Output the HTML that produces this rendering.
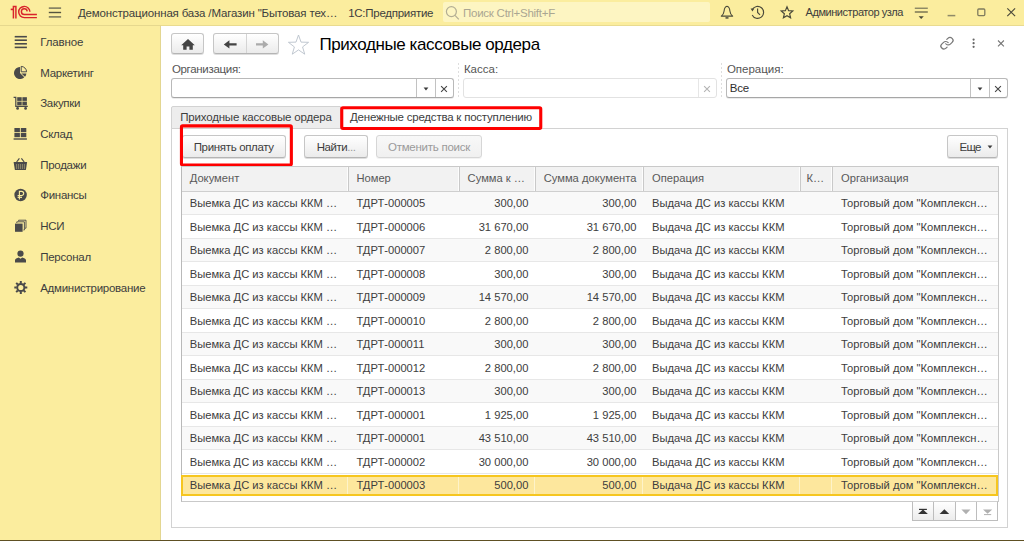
<!DOCTYPE html>
<html lang="ru">
<head>
<meta charset="utf-8">
<title>Приходные кассовые ордера</title>
<style>
*{box-sizing:border-box;margin:0;padding:0}
html,body{width:1024px;height:541px;overflow:hidden;background:#fff;font-family:"Liberation Sans",Arial,sans-serif;color:#333;font-size:11px}
.abs{position:absolute}
svg{position:absolute;overflow:visible}
#top{position:absolute;left:0;top:0;width:1024px;height:26px;background:#fbed9e;border-bottom:1px solid #e9db90}
#search{position:absolute;left:443px;top:2px;width:267px;height:20px;background:#fdf5c2;border-radius:2px}
#side{position:absolute;left:0;top:25px;width:161px;height:516px;background:#fbed9e;border-right:1px solid #e3d691;border-top:1px solid #e6d88e}
#bottomline{position:absolute;left:0;top:540px;width:1024px;height:1px;background:#5e5023}
.t{position:absolute;white-space:nowrap;color:#3d3d3d}
.t i{font-style:normal;color:#999}
.btn{position:absolute;border:1px solid #c6c6c6;border-bottom-color:#b4b4b4;border-radius:3px;background:linear-gradient(#ffffff,#ebebeb);box-shadow:0 1px 0 rgba(0,0,0,.13);white-space:nowrap}
.btn.dis{background:linear-gradient(#f8f8f8,#f0f0f0);box-shadow:0 1px 0 rgba(0,0,0,.05);border-color:#d6d6d6}
.inp{position:absolute;border:1px solid #b9b9b9;border-bottom-color:#a6a6a6;border-radius:3px;background:#fff;height:20px;box-shadow:0 1px 0 rgba(0,0,0,.08)}
.inp.dis{border-color:#e2e2e2;box-shadow:none}
.vdot{position:absolute;top:63px;width:1px;height:36px;background:repeating-linear-gradient(#dedede 0,#dedede 2px,transparent 2px,transparent 4px)}
#panel{position:absolute;left:171px;top:128px;width:837px;height:400px;border:1px solid #d2d2d2;background:#fff}
#tab1{position:absolute;left:171px;top:106px;width:170px;height:23px;background:#ededed;border:1px solid #d2d2d2;border-radius:2px 0 0 0}
#tab2{position:absolute;left:341px;top:107px;width:201px;height:22px;background:#fff}
#tbl{position:absolute;left:181px;top:166px;width:818px;height:336px;border:1px solid #c9c9c9;border-left-color:#b9b9b9;background:#fff}
#hd{position:absolute;left:182px;top:167px;width:816px;height:25px;background:#f2f2f2;border-bottom:1px solid #cfcfcf}
.hsep{position:absolute;top:167px;width:2px;height:24px;background:linear-gradient(90deg,#fdfdfd 50%,#c9c9c9 50%)}
.row{position:absolute;left:182px;width:816px;border-bottom:1px solid #e7e7e7}
.row.alt{background:#f9f9f9}
#sel{position:absolute;left:181px;top:475px;width:817px;height:21px;background:#fde79d;border:2px solid #f6c61f}
#pager{position:absolute;left:912px;top:501px;width:86px;height:20px;border:1px solid #bdbdbd;border-top-color:#d0d0d0;background:#fff}.pg{position:absolute;top:0;height:18px;border-right:1px solid #bdbdbd}.pg.a{background:linear-gradient(#fff,#ececec)}
.ssep{position:absolute;top:477px;width:1px;height:17px;background:#fef3c9}
</style>
</head>
<body>
<div id="top"></div>
<svg style="left:8px;top:3px" width="32" height="18" viewBox="8 3 32 18" ><g fill="none" stroke="#d9232b" stroke-width="1.45"><path d="M10.7 9.4H13.3" stroke-width="1.6"/><path d="M13.4 18.4V6.5H15.9V18.4"/><path d="M29.9 11.8A5.6 5.6 0 1 0 24.3 17.6H36.9"/><path d="M27.2 11.4A2.9 2.9 0 1 0 24.3 14.5H36.9"/></g></svg>
<svg style="left:46px;top:4px" width="18" height="16" viewBox="46 4 18 16" ><g stroke="#6d6b55" stroke-width="1.4"><path d="M48.8 8.1H61.1"/><path d="M48.8 12.5H61.1" stroke="#55543f"/><path d="M48.8 16.9H61.1"/></g></svg>
<div class="t" style="top:5.68px;font-size:11.5px;line-height:14px;height:14px;left:77.90px;letter-spacing:-0.162px;">Демонстрационная база /Магазин "Бытовая тех…</div>
<div class="t" style="top:5.68px;font-size:11.5px;line-height:14px;height:14px;left:348.20px;letter-spacing:-0.270px;">1С:Предприятие</div>
<div id="search"></div>
<svg style="left:444px;top:4px" width="16" height="18" viewBox="444 4 16 18" ><g fill="none" stroke="#b3ae94" stroke-width="1.2"><circle cx="451.4" cy="11.6" r="5"/><path d="M455 15.4L458.8 19.4"/></g></svg>
<div class="t" style="top:5.53px;font-size:11.5px;line-height:14px;height:14px;left:463.00px;letter-spacing:-0.246px;color:#aaa692;">Поиск Ctrl+Shift+F</div>
<svg style="left:718px;top:3px" width="18" height="18" viewBox="718 3 18 18" ><g fill="none" stroke="#4b4a3a" stroke-width="1.1" stroke-linejoin="round"><path d="M727 6.3C725.2 6.7 724.3 8.6 724.1 11C723.9 13.4 723.1 14.8 721.3 16.1H732.7C730.9 14.8 730.1 13.4 729.9 11C729.7 8.6 728.8 6.7 727 6.3Z"/><path d="M725.5 17.9H728.5" stroke-width="1.5"/></g></svg>
<svg style="left:748px;top:3px" width="20" height="20" viewBox="748 3 20 20" ><g fill="none" stroke="#4b4a3a" stroke-width="1.15"><path d="M752.3 9.6A6 6 0 1 1 752.2 15"/><path d="M757.6 8.4V12.4L760 14.8"/></g><path d="M750.6 8.4L754.4 8.6L752.4 11.6Z" fill="#4b4a3a"/></svg>
<svg style="left:778px;top:3px" width="18" height="18" viewBox="778 3 18 18" ><polygon points="787.00,6.80 788.62,10.68 792.80,11.01 789.62,13.75 790.59,17.84 787.00,15.65 783.41,17.84 784.38,13.75 781.20,11.01 785.38,10.68" fill="none" stroke="#4b4a3a" stroke-width="1.15" stroke-linejoin="miter"/></svg>
<div class="t" style="top:6.13px;font-size:11px;line-height:13px;height:13px;left:805.50px;letter-spacing:-0.438px;">Администратор узла</div>
<svg style="left:912px;top:4px" width="18" height="18" viewBox="912 4 18 18" ><g stroke="#4b4a3a" stroke-width="1.1"><path d="M914.8 8.2H927.8" stroke="#6a6852"/><path d="M914.8 12H927.8"/></g><path d="M918.6 16.3H923.8L921.2 19.1Z" fill="#4b4a3a"/></svg>
<svg style="left:945px;top:10px" width="12" height="8" viewBox="945 10 12 8" ><path d="M947.6 15.6H955.3" stroke="#8f8a68" stroke-width="1.5"/></svg>
<svg style="left:975px;top:6px" width="12" height="12" viewBox="975 6 12 12" ><rect x="977.8" y="9" width="7" height="6.6" rx="1" fill="none" stroke="#7f7b5e" stroke-width="1.3"/></svg>
<svg style="left:1005px;top:6px" width="12" height="12" viewBox="1005 6 12 12" ><path d="M1007.3 8.4L1015.1 16.1M1015.1 8.4L1007.3 16.1" stroke="#4d4b3b" stroke-width="1.2" fill="none"/></svg>
<div id="side"></div>
<div class="t" style="top:34.93px;font-size:11.5px;line-height:14px;height:14px;left:40.20px;letter-spacing:-0.108px;">Главное</div>
<div class="t" style="top:65.63px;font-size:11.5px;line-height:14px;height:14px;left:40.20px;letter-spacing:-0.270px;">Маркетинг</div>
<div class="t" style="top:96.33px;font-size:11.5px;line-height:14px;height:14px;left:40.20px;letter-spacing:-0.270px;">Закупки</div>
<div class="t" style="top:127.03px;font-size:11.5px;line-height:14px;height:14px;left:40.20px;letter-spacing:-0.270px;">Склад</div>
<div class="t" style="top:157.73px;font-size:11.5px;line-height:14px;height:14px;left:40.20px;letter-spacing:-0.270px;">Продажи</div>
<div class="t" style="top:188.43px;font-size:11.5px;line-height:14px;height:14px;left:40.20px;letter-spacing:-0.270px;">Финансы</div>
<div class="t" style="top:219.13px;font-size:11.5px;line-height:14px;height:14px;left:40.20px;letter-spacing:-0.270px;">НСИ</div>
<div class="t" style="top:249.83px;font-size:11.5px;line-height:14px;height:14px;left:40.20px;letter-spacing:-0.270px;">Персонал</div>
<div class="t" style="top:280.53px;font-size:11.5px;line-height:14px;height:14px;left:40.20px;letter-spacing:-0.269px;">Администрирование</div>
<svg style="left:13px;top:34px" width="16" height="16" viewBox="13 34 16 16" ><g stroke="#4a4a4a" stroke-width="1.6"><path d="M14.7 36.7H26.9"/><path d="M14.7 40.2H26.9"/><path d="M14.7 43.8H26.9"/><path d="M14.7 47.4H26.9"/></g></svg>
<svg style="left:12px;top:64px" width="18" height="18" viewBox="12 64 18 18" ><path d="M20 73V67A6 6 0 1 0 24.240000000000002 77.24Z" fill="#4a4a4a"/><path d="M21.2 71.8V66.4A5.6 5.6 0 0 1 26.6 71.8Z" fill="none" stroke="#4a4a4a" stroke-width="1"/><path d="M21.4 73.4H26.4A6 6 0 0 1 25 76.8Z" fill="#4a4a4a"/></svg>
<svg style="left:12px;top:95px" width="18" height="16" viewBox="12 95 18 16" ><g fill="#4a4a4a"><rect x="17.2" y="97.2" width="4.5" height="3.7"/><rect x="17.2" y="101.6" width="4.5" height="3.7"/><rect x="22.4" y="97.2" width="4.5" height="3.7"/><rect x="22.4" y="101.6" width="4.5" height="3.7"/><circle cx="17.6" cy="108.4" r="1.4"/><circle cx="25.6" cy="108.4" r="1.4"/></g><path d="M13.6 97.4H15.8V106.4H27.8" fill="none" stroke="#4a4a4a" stroke-width="1.2"/></svg>
<svg style="left:12px;top:126px" width="18" height="16" viewBox="12 126 18 16" ><g fill="#4a4a4a"><rect x="14.4" y="128" width="5.5" height="4.2"/><rect x="14.4" y="133" width="5.5" height="4.2"/><rect x="20.8" y="128" width="5.5" height="4.2"/><rect x="20.8" y="133" width="5.5" height="4.2"/></g><path d="M13.6 139H26.9" stroke="#4a4a4a" stroke-width="1.4"/></svg>
<svg style="left:12px;top:156px" width="18" height="16" viewBox="12 156 18 16" ><path d="M13.6 162H27.1L25.9 170H14.9Z" fill="#4a4a4a"/><g stroke="#fbed9e" stroke-width="0.7" opacity="0.55"><path d="M16.4 164V169"/><path d="M18.4 164V169"/><path d="M20.4 164V169"/><path d="M22.4 164V169"/><path d="M24.4 164V169"/></g><path d="M16.6 162L19.4 158.4M24.2 162L21.4 158.4" stroke="#4a4a4a" stroke-width="1.2" fill="none"/></svg>
<svg style="left:12px;top:187px" width="18" height="16" viewBox="12 187 18 16" ><circle cx="20.6" cy="195" r="6.2" fill="#4a4a4a"/><g fill="none" stroke="#fbed9e" stroke-width="1.1"><path d="M19.4 199.4V191.4H21.6A2.1 2.1 0 0 1 21.6 195.6H17.6"/><path d="M17.6 197.4H22"/></g></svg>
<svg style="left:12px;top:218px" width="18" height="16" viewBox="12 218 18 16" ><rect x="15" y="223.6" width="7.6" height="8.2" fill="#4a4a4a"/><path d="M16.8 223V221.8H24.4V230H23.4" fill="none" stroke="#4a4a4a" stroke-width="0.9"/><path d="M18.6 221.2V220.2H26V228.2H25" fill="none" stroke="#4a4a4a" stroke-width="0.9"/></svg>
<svg style="left:12px;top:249px" width="18" height="16" viewBox="12 249 18 16" ><circle cx="20.5" cy="253.6" r="3.1" fill="#4a4a4a"/><path d="M15 262.6V260.2C15 258.6 17 258 18.8 257.4L20.5 258.8L22.2 257.4C24 258 26 258.6 26 260.2V262.6Z" fill="#4a4a4a"/></svg>
<svg style="left:12px;top:279px" width="18" height="18" viewBox="12 279 18 18" ><circle cx="20.8" cy="287.5" r="3.6" fill="none" stroke="#4a4a4a" stroke-width="2"/><g stroke="#4a4a4a" stroke-width="2"><path d="M25.00 287.50L27.30 287.50"/><path d="M23.77 290.47L25.40 292.10"/><path d="M20.80 291.70L20.80 294.00"/><path d="M17.83 290.47L16.20 292.10"/><path d="M16.60 287.50L14.30 287.50"/><path d="M17.83 284.53L16.20 282.90"/><path d="M20.80 283.30L20.80 281.00"/><path d="M23.77 284.53L25.40 282.90"/></g></svg>
<div class="btn" style="left:171px;top:33px;width:33px;height:21px"></div>
<svg style="left:180px;top:37px" width="16" height="14" viewBox="180 37 16 14" ><path d="M188 39L181.2 45.2H183.2V49.8H186.6V46.4H189.4V49.8H192.8V45.2H194.8Z" fill="#444"/></svg>
<div class="btn" style="left:213px;top:33px;width:66px;height:21px"><div class="abs" style="left:32px;top:0;width:1px;height:19px;background:#d4d4d4"></div></div>
<svg style="left:222px;top:38px" width="16" height="12" viewBox="222 38 16 12" ><path d="M223.8 44.4L229.4 40.2V43.2H236.6V45.6H229.4V48.6Z" fill="#444"/></svg><svg style="left:254px;top:38px" width="16" height="12" viewBox="254 38 16 12" ><path d="M268.4 44.4L262.8 40.2V43.2H256V45.6H262.8V48.6Z" fill="#ababab"/></svg>
<svg style="left:286px;top:33px" width="24" height="24" viewBox="286 33 24 24" ><polygon points="298.50,35.00 301.03,42.12 308.58,42.32 302.59,46.93 304.73,54.18 298.50,49.90 292.27,54.18 294.41,46.93 288.42,42.32 295.97,42.12" fill="#fff" stroke="#b9c1cb" stroke-width="0.9"/></svg>
<div class="t" style="top:34.65px;font-size:17px;line-height:19px;height:19px;left:319.40px;letter-spacing:-0.404px;color:#000;">Приходные кассовые ордера</div>
<svg style="left:938px;top:34px" width="18" height="18" viewBox="938 34 18 18" ><g fill="none" stroke="#787878" stroke-width="2" stroke-linecap="round" stroke-linejoin="round" transform="translate(939.63,36.36) scale(0.61,0.57)"><path d="M10 13a5 5 0 0 0 7.54.54l3-3a5 5 0 0 0-7.07-7.07l-1.72 1.71"/><path d="M14 11a5 5 0 0 0-7.54-.54l-3 3a5 5 0 0 0 7.07 7.07l1.71-1.71"/></g></svg>
<svg style="left:971px;top:37px" width="6" height="12" viewBox="971 37 6 12" ><g fill="#666"><circle cx="973.6" cy="39.6" r="1.1"/><circle cx="973.6" cy="43.2" r="1.1"/><circle cx="973.6" cy="46.8" r="1.1"/></g></svg>
<svg style="left:996px;top:38px" width="10" height="10" viewBox="996 38 10 10" ><path d="M998 40.5L1003.9 46.4M1003.9 40.5L998 46.4" stroke="#777" stroke-width="1.1" fill="none"/></svg>
<div class="t" style="top:62.23px;font-size:11.5px;line-height:14px;height:14px;left:171.90px;letter-spacing:-0.314px;color:#555;">Организация:</div><div class="inp" style="left:171px;top:78px;width:283px"></div><div class="abs" style="left:416px;top:79px;width:1px;height:18px;background:#c2c2c2"></div><svg style="left:421.7px;top:86.2px" width="8" height="6" viewBox="421.7 86.2 8 6" ><path d="M423.3 87.8H428.09999999999997L425.7 90.7Z" fill="#3a3a3a"/></svg><div class="abs" style="left:435px;top:79px;width:1px;height:18px;background:#c2c2c2"></div><svg style="left:439.4px;top:84.2px" width="10" height="10" viewBox="439.4 84.2 10 10" ><path d="M441.5 86.3L447.29999999999995 92.10000000000001M447.29999999999995 86.3L441.5 92.10000000000001" stroke="#444" stroke-width="1.1" fill="none"/></svg>
<div class="vdot" style="left:458px"></div>
<div class="t" style="top:62.23px;font-size:11.5px;line-height:14px;height:14px;left:463.90px;color:#555;">Касса:</div><div class="inp dis" style="left:463px;top:78px;width:254px"></div><div class="abs" style="left:698px;top:79px;width:1px;height:18px;background:#e6e6e6"></div><svg style="left:702.4px;top:84.2px" width="10" height="10" viewBox="702.4 84.2 10 10" ><path d="M704.5 86.3L710.3 92.10000000000001M710.3 86.3L704.5 92.10000000000001" stroke="#b4b4b4" stroke-width="1.1" fill="none"/></svg>
<div class="vdot" style="left:721px"></div>
<div class="t" style="top:62.23px;font-size:11.5px;line-height:14px;height:14px;left:726.90px;color:#555;">Операция:</div><div class="inp" style="left:726px;top:78px;width:282px"></div><div class="t" style="top:81.38px;font-size:11.5px;line-height:14px;height:14px;left:729.80px;letter-spacing:-0.176px;color:#2e2e2e;">Все</div><div class="abs" style="left:970px;top:79px;width:1px;height:18px;background:#c2c2c2"></div><svg style="left:975.7px;top:86.2px" width="8" height="6" viewBox="975.7 86.2 8 6" ><path d="M977.3000000000001 87.8H982.1L979.7 90.7Z" fill="#3a3a3a"/></svg><div class="abs" style="left:989px;top:79px;width:1px;height:18px;background:#c2c2c2"></div><svg style="left:993.4px;top:84.2px" width="10" height="10" viewBox="993.4 84.2 10 10" ><path d="M995.5 86.3L1001.3 92.10000000000001M1001.3 86.3L995.5 92.10000000000001" stroke="#444" stroke-width="1.1" fill="none"/></svg>
<div id="panel"></div>
<div id="tab1"></div>
<div id="tab2"></div>
<div class="t" style="top:110.48px;font-size:11.5px;line-height:14px;height:14px;left:180.20px;letter-spacing:-0.175px;">Приходные кассовые ордера</div>
<div class="t" style="top:110.48px;font-size:11.5px;line-height:14px;height:14px;left:350.00px;letter-spacing:-0.219px;">Денежные средства к поступлению</div>
<svg style="left:339px;top:105px" width="206" height="27" viewBox="339 105 206 27" ><rect x="341.75" y="107.75" width="199.00" height="20.70" rx="1.2" fill="none" stroke="#fe0000" stroke-width="3.1"/></svg>
<div class="btn " style="left:182px;top:135px;width:104px;height:23px"></div>
<div class="t" style="top:139.53px;font-size:11.5px;line-height:14px;height:14px;left:193.70px;letter-spacing:-0.332px;">Принять оплату</div>
<svg style="left:178px;top:123px" width="116" height="46" viewBox="178 123 116 46" ><rect x="181.45" y="125.85" width="109.90" height="39.10" rx="1.2" fill="none" stroke="#fe0000" stroke-width="3.1"/></svg>
<div class="btn " style="left:304px;top:135px;width:64px;height:23px"></div>
<div class="t" style="top:139.53px;font-size:11.5px;line-height:14px;height:14px;left:316.70px;letter-spacing:-0.438px;">Найти<i>...</i></div>
<div class="btn dis" style="left:376px;top:135px;width:106px;height:23px"></div>
<div class="t" style="top:139.53px;font-size:11.5px;line-height:14px;height:14px;left:388.00px;letter-spacing:-0.256px;color:#9a9a9a;">Отменить поиск</div>
<div class="btn " style="left:947px;top:135px;width:51px;height:23px"></div>
<div class="t" style="top:139.53px;font-size:11.5px;line-height:14px;height:14px;left:959.50px;letter-spacing:-0.735px;">Еще</div>
<svg style="left:986px;top:144.4px" width="8" height="6" viewBox="986 144.4 8 6" ><path d="M987.6 146.0H992.4L990 148.9Z" fill="#3a3a3a"/></svg>
<div id="tbl"></div>
<div id="hd"></div>
<div class="hsep" style="left:347px"></div>
<div class="hsep" style="left:458px"></div>
<div class="hsep" style="left:534px"></div>
<div class="hsep" style="left:642px"></div>
<div class="hsep" style="left:799px"></div>
<div class="hsep" style="left:831px"></div>
<div class="row alt" style="top:191.99px;height:23.50px"></div>
<div class="row" style="top:215.49px;height:23.50px"></div>
<div class="row alt" style="top:238.99px;height:23.50px"></div>
<div class="row" style="top:262.49px;height:23.50px"></div>
<div class="row alt" style="top:285.99px;height:23.50px"></div>
<div class="row" style="top:309.49px;height:23.50px"></div>
<div class="row alt" style="top:332.99px;height:23.50px"></div>
<div class="row" style="top:356.49px;height:23.50px"></div>
<div class="row alt" style="top:379.99px;height:23.50px"></div>
<div class="row" style="top:403.49px;height:23.50px"></div>
<div class="row alt" style="top:426.99px;height:23.50px"></div>
<div class="row" style="top:450.49px;height:23.50px"></div>
<div id="sel"></div>
<div class="ssep" style="left:347px"></div>
<div class="ssep" style="left:458px"></div>
<div class="ssep" style="left:534px"></div>
<div class="ssep" style="left:642px"></div>
<div class="ssep" style="left:799px"></div>
<div class="ssep" style="left:831px"></div>
<div class="t" style="top:172.23px;font-size:11.2px;line-height:13px;height:13px;left:189.70px;color:#595959;">Документ</div>
<div class="t" style="top:172.23px;font-size:11.2px;line-height:13px;height:13px;left:356.40px;color:#595959;">Номер</div>
<div class="t" style="top:172.23px;font-size:11.2px;line-height:13px;height:13px;left:467.60px;color:#595959;">Сумма к …</div>
<div class="t" style="top:172.23px;font-size:11.2px;line-height:13px;height:13px;left:543.70px;color:#595959;">Сумма документа</div>
<div class="t" style="top:172.23px;font-size:11.2px;line-height:13px;height:13px;left:652.00px;color:#595959;">Операция</div>
<div class="t" style="top:172.23px;font-size:11.2px;line-height:13px;height:13px;left:806.60px;color:#595959;">К…</div>
<div class="t" style="top:172.23px;font-size:11.2px;line-height:13px;height:13px;left:841.10px;color:#595959;">Организация</div>
<div class="t" style="top:197.13px;font-size:11.2px;line-height:13px;height:13px;left:189.70px;">Выемка ДС из кассы ККМ …</div>
<div class="t" style="top:197.13px;font-size:11.2px;line-height:13px;height:13px;left:356.40px;">ТДРТ-000005</div>
<div class="t" style="top:197.13px;font-size:11.2px;line-height:13px;height:13px;right:495.60px;">300,00</div>
<div class="t" style="top:197.13px;font-size:11.2px;line-height:13px;height:13px;right:387.60px;">300,00</div>
<div class="t" style="top:197.13px;font-size:11.2px;line-height:13px;height:13px;left:652.00px;">Выдача ДС из кассы ККМ</div>
<div class="t" style="top:197.13px;font-size:11.2px;line-height:13px;height:13px;left:841.10px;">Торговый дом "Комплексн…</div>
<div class="t" style="top:220.63px;font-size:11.2px;line-height:13px;height:13px;left:189.70px;">Выемка ДС из кассы ККМ …</div>
<div class="t" style="top:220.63px;font-size:11.2px;line-height:13px;height:13px;left:356.40px;">ТДРТ-000006</div>
<div class="t" style="top:220.63px;font-size:11.2px;line-height:13px;height:13px;right:495.60px;">31 670,00</div>
<div class="t" style="top:220.63px;font-size:11.2px;line-height:13px;height:13px;right:387.60px;">31 670,00</div>
<div class="t" style="top:220.63px;font-size:11.2px;line-height:13px;height:13px;left:652.00px;">Выдача ДС из кассы ККМ</div>
<div class="t" style="top:220.63px;font-size:11.2px;line-height:13px;height:13px;left:841.10px;">Торговый дом "Комплексн…</div>
<div class="t" style="top:244.13px;font-size:11.2px;line-height:13px;height:13px;left:189.70px;">Выемка ДС из кассы ККМ …</div>
<div class="t" style="top:244.13px;font-size:11.2px;line-height:13px;height:13px;left:356.40px;">ТДРТ-000007</div>
<div class="t" style="top:244.13px;font-size:11.2px;line-height:13px;height:13px;right:495.60px;">2 800,00</div>
<div class="t" style="top:244.13px;font-size:11.2px;line-height:13px;height:13px;right:387.60px;">2 800,00</div>
<div class="t" style="top:244.13px;font-size:11.2px;line-height:13px;height:13px;left:652.00px;">Выдача ДС из кассы ККМ</div>
<div class="t" style="top:244.13px;font-size:11.2px;line-height:13px;height:13px;left:841.10px;">Торговый дом "Комплексн…</div>
<div class="t" style="top:267.63px;font-size:11.2px;line-height:13px;height:13px;left:189.70px;">Выемка ДС из кассы ККМ …</div>
<div class="t" style="top:267.63px;font-size:11.2px;line-height:13px;height:13px;left:356.40px;">ТДРТ-000008</div>
<div class="t" style="top:267.63px;font-size:11.2px;line-height:13px;height:13px;right:495.60px;">300,00</div>
<div class="t" style="top:267.63px;font-size:11.2px;line-height:13px;height:13px;right:387.60px;">300,00</div>
<div class="t" style="top:267.63px;font-size:11.2px;line-height:13px;height:13px;left:652.00px;">Выдача ДС из кассы ККМ</div>
<div class="t" style="top:267.63px;font-size:11.2px;line-height:13px;height:13px;left:841.10px;">Торговый дом "Комплексн…</div>
<div class="t" style="top:291.13px;font-size:11.2px;line-height:13px;height:13px;left:189.70px;">Выемка ДС из кассы ККМ …</div>
<div class="t" style="top:291.13px;font-size:11.2px;line-height:13px;height:13px;left:356.40px;">ТДРТ-000009</div>
<div class="t" style="top:291.13px;font-size:11.2px;line-height:13px;height:13px;right:495.60px;">14 570,00</div>
<div class="t" style="top:291.13px;font-size:11.2px;line-height:13px;height:13px;right:387.60px;">14 570,00</div>
<div class="t" style="top:291.13px;font-size:11.2px;line-height:13px;height:13px;left:652.00px;">Выдача ДС из кассы ККМ</div>
<div class="t" style="top:291.13px;font-size:11.2px;line-height:13px;height:13px;left:841.10px;">Торговый дом "Комплексн…</div>
<div class="t" style="top:314.63px;font-size:11.2px;line-height:13px;height:13px;left:189.70px;">Выемка ДС из кассы ККМ …</div>
<div class="t" style="top:314.63px;font-size:11.2px;line-height:13px;height:13px;left:356.40px;">ТДРТ-000010</div>
<div class="t" style="top:314.63px;font-size:11.2px;line-height:13px;height:13px;right:495.60px;">2 800,00</div>
<div class="t" style="top:314.63px;font-size:11.2px;line-height:13px;height:13px;right:387.60px;">2 800,00</div>
<div class="t" style="top:314.63px;font-size:11.2px;line-height:13px;height:13px;left:652.00px;">Выдача ДС из кассы ККМ</div>
<div class="t" style="top:314.63px;font-size:11.2px;line-height:13px;height:13px;left:841.10px;">Торговый дом "Комплексн…</div>
<div class="t" style="top:338.13px;font-size:11.2px;line-height:13px;height:13px;left:189.70px;">Выемка ДС из кассы ККМ …</div>
<div class="t" style="top:338.13px;font-size:11.2px;line-height:13px;height:13px;left:356.40px;">ТДРТ-000011</div>
<div class="t" style="top:338.13px;font-size:11.2px;line-height:13px;height:13px;right:495.60px;">300,00</div>
<div class="t" style="top:338.13px;font-size:11.2px;line-height:13px;height:13px;right:387.60px;">300,00</div>
<div class="t" style="top:338.13px;font-size:11.2px;line-height:13px;height:13px;left:652.00px;">Выдача ДС из кассы ККМ</div>
<div class="t" style="top:338.13px;font-size:11.2px;line-height:13px;height:13px;left:841.10px;">Торговый дом "Комплексн…</div>
<div class="t" style="top:361.63px;font-size:11.2px;line-height:13px;height:13px;left:189.70px;">Выемка ДС из кассы ККМ …</div>
<div class="t" style="top:361.63px;font-size:11.2px;line-height:13px;height:13px;left:356.40px;">ТДРТ-000012</div>
<div class="t" style="top:361.63px;font-size:11.2px;line-height:13px;height:13px;right:495.60px;">2 800,00</div>
<div class="t" style="top:361.63px;font-size:11.2px;line-height:13px;height:13px;right:387.60px;">2 800,00</div>
<div class="t" style="top:361.63px;font-size:11.2px;line-height:13px;height:13px;left:652.00px;">Выдача ДС из кассы ККМ</div>
<div class="t" style="top:361.63px;font-size:11.2px;line-height:13px;height:13px;left:841.10px;">Торговый дом "Комплексн…</div>
<div class="t" style="top:385.13px;font-size:11.2px;line-height:13px;height:13px;left:189.70px;">Выемка ДС из кассы ККМ …</div>
<div class="t" style="top:385.13px;font-size:11.2px;line-height:13px;height:13px;left:356.40px;">ТДРТ-000013</div>
<div class="t" style="top:385.13px;font-size:11.2px;line-height:13px;height:13px;right:495.60px;">300,00</div>
<div class="t" style="top:385.13px;font-size:11.2px;line-height:13px;height:13px;right:387.60px;">300,00</div>
<div class="t" style="top:385.13px;font-size:11.2px;line-height:13px;height:13px;left:652.00px;">Выдача ДС из кассы ККМ</div>
<div class="t" style="top:385.13px;font-size:11.2px;line-height:13px;height:13px;left:841.10px;">Торговый дом "Комплексн…</div>
<div class="t" style="top:408.63px;font-size:11.2px;line-height:13px;height:13px;left:189.70px;">Выемка ДС из кассы ККМ …</div>
<div class="t" style="top:408.63px;font-size:11.2px;line-height:13px;height:13px;left:356.40px;">ТДРТ-000001</div>
<div class="t" style="top:408.63px;font-size:11.2px;line-height:13px;height:13px;right:495.60px;">1 925,00</div>
<div class="t" style="top:408.63px;font-size:11.2px;line-height:13px;height:13px;right:387.60px;">1 925,00</div>
<div class="t" style="top:408.63px;font-size:11.2px;line-height:13px;height:13px;left:652.00px;">Выдача ДС из кассы ККМ</div>
<div class="t" style="top:408.63px;font-size:11.2px;line-height:13px;height:13px;left:841.10px;">Торговый дом "Комплексн…</div>
<div class="t" style="top:432.13px;font-size:11.2px;line-height:13px;height:13px;left:189.70px;">Выемка ДС из кассы ККМ …</div>
<div class="t" style="top:432.13px;font-size:11.2px;line-height:13px;height:13px;left:356.40px;">ТДРТ-000001</div>
<div class="t" style="top:432.13px;font-size:11.2px;line-height:13px;height:13px;right:495.60px;">43 510,00</div>
<div class="t" style="top:432.13px;font-size:11.2px;line-height:13px;height:13px;right:387.60px;">43 510,00</div>
<div class="t" style="top:432.13px;font-size:11.2px;line-height:13px;height:13px;left:652.00px;">Выдача ДС из кассы ККМ</div>
<div class="t" style="top:432.13px;font-size:11.2px;line-height:13px;height:13px;left:841.10px;">Торговый дом "Комплексн…</div>
<div class="t" style="top:455.63px;font-size:11.2px;line-height:13px;height:13px;left:189.70px;">Выемка ДС из кассы ККМ …</div>
<div class="t" style="top:455.63px;font-size:11.2px;line-height:13px;height:13px;left:356.40px;">ТДРТ-000002</div>
<div class="t" style="top:455.63px;font-size:11.2px;line-height:13px;height:13px;right:495.60px;">30 000,00</div>
<div class="t" style="top:455.63px;font-size:11.2px;line-height:13px;height:13px;right:387.60px;">30 000,00</div>
<div class="t" style="top:455.63px;font-size:11.2px;line-height:13px;height:13px;left:652.00px;">Выдача ДС из кассы ККМ</div>
<div class="t" style="top:455.63px;font-size:11.2px;line-height:13px;height:13px;left:841.10px;">Торговый дом "Комплексн…</div>
<div class="t" style="top:479.13px;font-size:11.2px;line-height:13px;height:13px;left:189.70px;">Выемка ДС из кассы ККМ …</div>
<div class="t" style="top:479.13px;font-size:11.2px;line-height:13px;height:13px;left:356.40px;">ТДРТ-000003</div>
<div class="t" style="top:479.13px;font-size:11.2px;line-height:13px;height:13px;right:495.60px;">500,00</div>
<div class="t" style="top:479.13px;font-size:11.2px;line-height:13px;height:13px;right:387.60px;">500,00</div>
<div class="t" style="top:479.13px;font-size:11.2px;line-height:13px;height:13px;left:652.00px;">Выдача ДС из кассы ККМ</div>
<div class="t" style="top:479.13px;font-size:11.2px;line-height:13px;height:13px;left:841.10px;">Торговый дом "Комплексн…</div>
<div id="pager"><div class="pg a" style="left:0;width:21px"></div><div class="pg a" style="left:21px;width:22px"></div><div class="pg" style="left:43px;width:21px"></div></div>
<svg style="left:912px;top:502px" width="86" height="18" viewBox="912 502 86 18" ><path d="M918 513.9L923 509.6L927.9 513.9Z" fill="#333"/><path d="M919 509.4H926.9" stroke="#333" stroke-width="1.2"/><path d="M939.6 514L944.4 509.3L949.2 514Z" fill="#333"/><path d="M961.4 509.6L966 514.2L970.5 509.6Z" fill="#b0b0b0"/><path d="M983 509.6L987.6 513.8L992.2 509.6Z" fill="#b0b0b0"/><path d="M984 514.6H991.2" stroke="#b0b0b0" stroke-width="1"/></svg>
<div id="bottomline"></div>
</body>
</html>
